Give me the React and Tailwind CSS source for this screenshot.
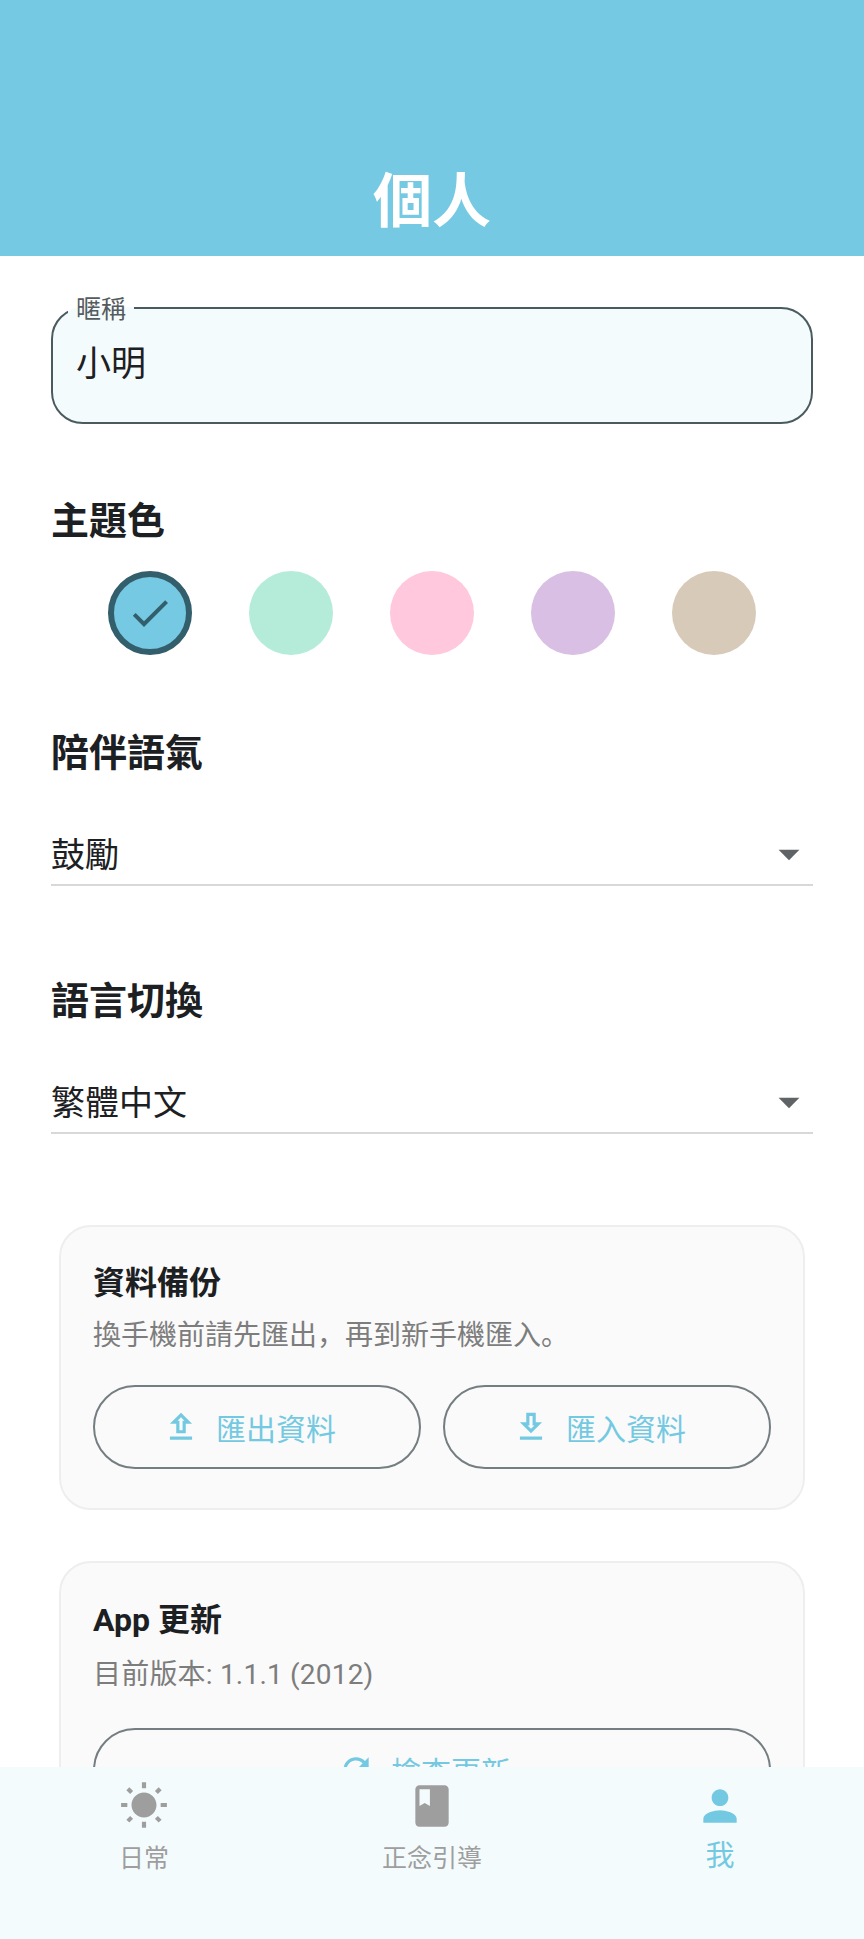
// Profile page
import React from 'react';
import { MdArrowDropDown, MdBook, MdCheck, MdOutlineDownload, MdOutlineUpload, MdPerson, MdRefresh, MdWbSunny } from 'react-icons/md';

const themeColors = ['bg-[#75c9e2]', 'bg-[#b5ecd9]', 'bg-[#ffc8dd]', 'bg-[#d8bfe3]', 'bg-[#d8cab8]'];

const SectionTitle = ({ className, children }) => (
    <h2 className={`text-[38px] leading-[44px] font-bold text-[#1c2022] ${className}`}>{children}</h2>
);

const Dropdown = ({ value, className }) => (
    <div className={`flex items-start justify-between h-[53px] border-b-2 border-[#d8d8d8] ${className}`}>
        <span className="text-[34px] leading-[44px] text-[#1c2022]">{value}</span>
        <MdArrowDropDown className="w-[50px] h-[50px] mt-[-4px] text-[#5f6365] mr-[-1px]" />
    </div>
);

const OutlineButton = ({ icon: Icon, label }) => (
    <button className="flex-1 h-[84px] flex items-center justify-center gap-[16px] pr-[16px] rounded-full border-2 border-[#747d80] text-[#74c9e2] text-[30px]">
        <Icon className="w-[38px] h-[38px]" />
        <span className="mt-[4px]">{label}</span>
    </button>
);

const Card = ({ className, children }) => (
    <div className={`mx-[8px] px-[32px] pt-[34px] rounded-[32px] border-2 border-[#eeeeee] bg-[#fafafa] ${className}`}>
        {children}
    </div>
);

const NavItem = ({ icon: Icon, label, active }) => (
    <div className={`flex flex-col items-center ${active ? 'text-[#74c9e2]' : 'text-[#9e9e9e]'}`}>
        <Icon className="w-[50px] h-[50px]" />
        <span className={active ? 'text-[29px] leading-[38px] mt-[6px]' : 'text-[25px] leading-[36px] mt-[10px]'}>{label}</span>
    </div>
);

export default function App() {
    return (
        <div className="w-[864px] h-[1939px] flex flex-col overflow-hidden bg-white font-['Roboto','Noto_Sans_CJK_SC',sans-serif]">
            <header className="h-[256px] shrink-0 bg-[#75c9e2] flex items-end justify-center pb-[14px]">
                <h1 className="text-[59px] leading-[80px] font-bold text-white">個人</h1>
            </header>

            <main className="flex-1 overflow-hidden px-[51px]">
                <fieldset className="mt-[35px] h-[133px] px-[24px] rounded-[32px] border-2 border-[#4a5b60] bg-[#f4fbfd]">
                    <legend className="ml-[-9px] px-[8px] pt-[4px] text-[25px] leading-[30px] text-[#555b5e]">暱稱</legend>
                    <div className="text-[35px] leading-[44px] text-[#1c2022] mt-[18px] ml-[-1px]">小明</div>
                </fieldset>

                <SectionTitle className="mt-[75px]">主題色</SectionTitle>
                <div className="flex justify-evenly mt-[28px]">
                    {themeColors.map((color, i) => (
                        <div key={color} className={`w-[84px] h-[84px] rounded-full flex items-center justify-center ${color} ${i === 0 ? 'border-[6px] border-[#335e6c]' : ''}`}>
                            {i === 0 && <MdCheck className="w-[48px] h-[48px] text-[#335e6c] shrink-0" />}
                        </div>
                    ))}
                </div>

                <SectionTitle className="mt-[76px]">陪伴語氣</SectionTitle>
                <Dropdown value="鼓勵" className="mt-[58px]" />

                <SectionTitle className="mt-[93px]">語言切換</SectionTitle>
                <Dropdown value="繁體中文" className="mt-[58px]" />

                <Card className="mt-[91px] h-[285px]">
                    <h3 className="text-[32px] leading-[44px] font-bold text-[#1c2022]">資料備份</h3>
                    <p className="text-[28px] leading-[40px] text-[#7d7d7d] mt-[11px]">{'換手機前請先匯出\uFF0C再到新手機匯入\u3002'}</p>
                    <div className="flex gap-[22px] mt-[29px]">
                        <OutlineButton icon={MdOutlineUpload} label="匯出資料" />
                        <OutlineButton icon={MdOutlineDownload} label="匯入資料" />
                    </div>
                </Card>

                <Card className="mt-[51px] h-[285px]">
                    <h3 className="mt-[1px] text-[32px] leading-[44px] font-bold text-[#1c2022]">App 更新</h3>
                    <p className="text-[28px] leading-[40px] tracking-[0.2px] text-[#7d7d7d] mt-[13px]">目前版本: 1.1.1 (2012)</p>
                    <div className="flex mt-[33px]">
                        <OutlineButton icon={MdRefresh} label="檢查更新" />
                    </div>
                </Card>
            </main>

            <nav className="h-[172px] shrink-0 grid grid-cols-3 pt-[14px] bg-[#f4fbfd]">
                <NavItem icon={MdWbSunny} label="日常" />
                <NavItem icon={MdBook} label="正念引導" />
                <NavItem icon={MdPerson} label="我" active />
            </nav>
        </div>
    );
}
